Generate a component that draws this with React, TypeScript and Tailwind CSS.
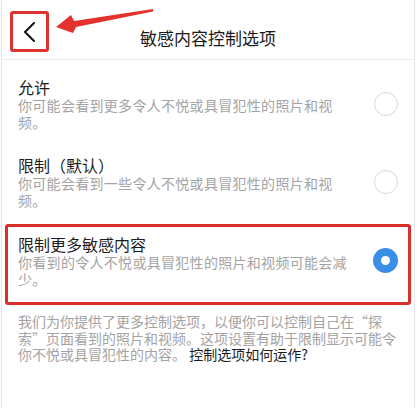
import React from "react";

const font = { fontFamily: '"Noto Sans CJK SC", "Noto Sans", sans-serif' };

function Radio({ checked }: { checked?: boolean }) {
  if (checked) {
    return (
      <div className="flex h-[25px] w-[25px] shrink-0 items-center justify-center rounded-full bg-[#3a8ee6]">
        <div className="h-[9px] w-[9px] rounded-full bg-white" />
      </div>
    );
  }
  return <div className="h-[24px] w-[24px] shrink-0 rounded-full border-[1.5px] border-[#d9d9d9]" />;
}

function Option({
  title,
  lines,
  checked,
}: {
  title: string;
  lines: string[];
  checked?: boolean;
}) {
  return (
    <div className="flex items-center justify-between">
      <div>
        <div className="text-[16px] leading-[20px] text-[#1c1c1c]">{title}</div>
        <div className="text-[14px] leading-[16.5px] tracking-[0.3px] text-[#a3a3a3]">
          {lines.map((l) => (
            <div key={l} className="whitespace-nowrap">
              {l}
            </div>
          ))}
        </div>
      </div>
      <Radio checked={checked} />
    </div>
  );
}

export default function App() {
  return (
    <div className="h-[408px] w-[417px] overflow-hidden bg-white" style={font}>
      <div className="mx-[1px] mr-[2px] h-full border-x border-[#e6e6e6]">
        <header className="relative flex h-[60px] items-center justify-center border-b border-[#ececec]">
          <div className="absolute left-[8px] top-[11px] flex h-[41px] w-[39px] items-center justify-center rounded-[3px] border-[3px] border-[#dc3330]">
            <svg width="14" height="20" viewBox="0 0 14 20" fill="none">
              <path d="M11 1 L2 10 L11 19" stroke="#111" strokeWidth="2" strokeLinecap="round" strokeLinejoin="round" />
            </svg>
          </div>
          <svg className="absolute left-0 top-0" width="160" height="40" viewBox="0 0 160 40">
            <polygon
              points="54,27 69,15 72,21 151,9 151,11.5 74,27 71,33"
              fill="#e3312c"
            />
          </svg>
          <h1 className="pt-[16px] text-[17px] leading-[22px] text-[#1a1a1a]">敏感内容控制选项</h1>
        </header>

        <div className="px-[16px] pt-[17px]">
          <Option title="允许" lines={["你可能会看到更多令人不悦或具冒犯性的照片和视", "频。"]} />
          <div className="mt-[25px]">
            <Option title="限制（默认）" lines={["你可能会看到一些令人不悦或具冒犯性的照片和视", "频。"]} />
          </div>
        </div>

        <div className="mx-[3px] mt-[16px] rounded-[3px] border-[3px] border-[#d9302c] px-[10px] pb-[15px] pt-[7px] pr-[10px]">
          <Option
            title="限制更多敏感内容"
            lines={["你看到的令人不悦或具冒犯性的照片和视频可能会减", "少。"]}
            checked
          />
        </div>

        <div className="px-[16px] pt-[8px] text-[14px] leading-[16.5px] text-[#a3a3a3]">
          <div className="whitespace-nowrap">我们为你提供了更多控制选项，以便你可以控制自己在“探</div>
          <div className="whitespace-nowrap">索”页面看到的照片和视频。这项设置有助于限制显示可能令</div>
          <div className="whitespace-nowrap">
            你不悦或具冒犯性的内容。 <span className="text-[#1c1c1c]">控制选项如何运作?</span>
          </div>
        </div>
      </div>
    </div>
  );
}
